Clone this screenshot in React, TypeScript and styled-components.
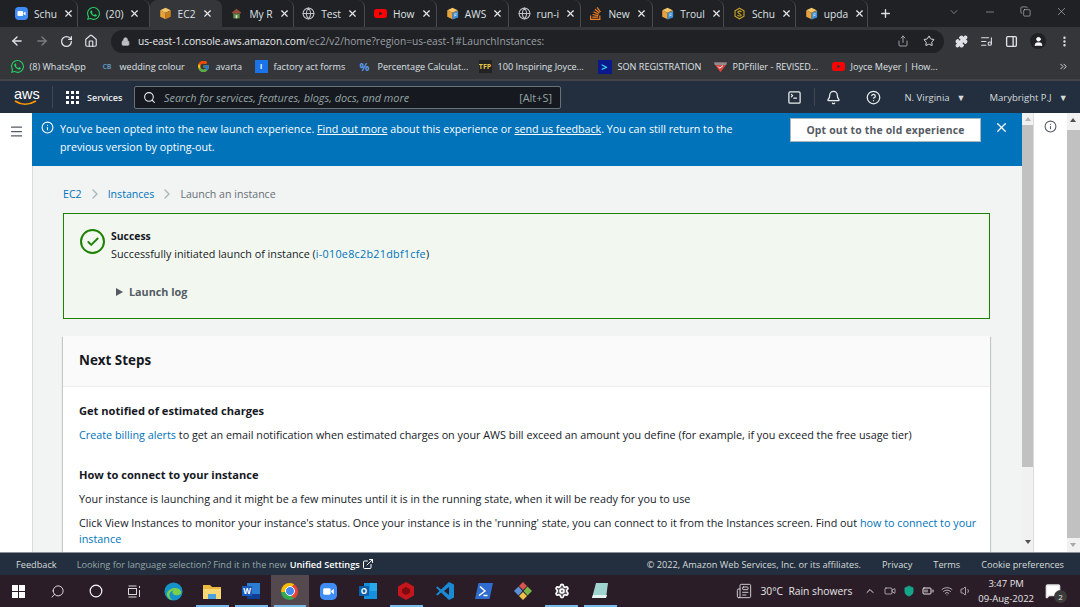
import React from 'react';
import styled, { createGlobalStyle } from 'styled-components';
import { SiWhatsapp, SiYoutube, SiStackoverflow } from 'react-icons/si';
import { FcGoogle } from 'react-icons/fc';
import {
  ArrowLeft, ArrowRight, RotateCw, Home, Lock, Share, Star, Puzzle, ListMusic, PanelRight, User,
  MoreVertical, X, Plus, ChevronDown, Minus, Copy, Globe, Search, Info, Menu, Bell, HelpCircle,
  SquareTerminal, Check, ExternalLink, Settings, Circle, ChevronUp, Wifi, Volume1, MessageSquare,
  ChevronRight, ChevronsRight, Newspaper, Video, BatteryMedium, ShieldCheck
} from 'lucide-react';

const Global = createGlobalStyle`
  html, body { margin:0; padding:0; height:100%; overflow:hidden; }
  body { font-family:"Open Sans","Noto Sans",sans-serif; background:#fff; }
  * { box-sizing:border-box; }
`;
const Page = styled.div`
  width:1080px;
  height:607px;
  display:flex;
  flex-direction:column;
  overflow:hidden;
`;
const TabStrip = styled.div`
  height:27px;
  background:#202124;
  display:flex;
  align-items:center;
  padding-left:6.5px;
  color:#dee1e6;
`;
const Tab = styled.div<{ $active?: boolean }>`
  width:71.8px;
  height:27px;
  flex:none;
  display:flex;
  align-items:center;
  gap:6px;
  padding:0 9px 0 8.5px;
  font-size:10.2px;
  border-radius:7px 7px 0 0;
  background:${p => (p.$active ? '#35363a' : 'transparent')};
  border-right:1px solid ${p => (p.$active ? 'transparent' : '#4a4b4f')};
  white-space:nowrap;
  > svg:last-child { margin-left:auto; flex:none; }
`;
const TabIconBox = styled.span`
  width:13px;
  height:13px;
  flex:none;
  display:flex;
  align-items:center;
  justify-content:center;
`;
const NewTab = styled.div`
  margin-left:11px;
  display:flex;
`;
const WindowButtons = styled.div`
  margin-left:auto;
  display:flex;
  align-items:center;
  gap:24px;
  padding:0 12px 4px 0;
  color:#d8d9db;
`;
const AddressRow = styled.div`
  height:27px;
  padding:1px 0 0 10px;
  background:#35363a;
  display:flex;
  align-items:center;
  color:#dee1e6;
`;
const NavButtons = styled.div`
  display:flex;
  align-items:center;
  gap:11px;
  width:101px;
  flex:none;
`;
const Omnibox = styled.div`
  width:833px;
  height:23px;
  flex:none;
  background:#202124;
  border-radius:12px;
  display:flex;
  align-items:center;
  padding:0 9px 0 10px;
  font-size:10.2px;
  color:#9aa0a6;
`;
const OmniText = styled.div`
  margin-left:8px;
  flex:1;
  white-space:nowrap;
  > b { font-weight:400; color:#e8eaed; }
`;
const OmniIcons = styled.div`
  display:flex;
  gap:14px;
  align-items:center;
`;
const ExtensionIcons = styled.div`
  margin-left:11px;
  display:flex;
  align-items:center;
  gap:12px;
`;
const Avatar = styled.div`
  width:16px;
  height:16px;
  border-radius:50%;
  background:#202124;
  display:flex;
  align-items:center;
  justify-content:center;
`;
const Bookmarks = styled.div`
  height:27px;
  background:#35363a;
  border-bottom:2px solid #434447;
  display:flex;
  align-items:center;
  padding:0 11px 0 10.5px;
  font-size:9.1px;
  color:#dee1e6;
  white-space:nowrap;
`;
const Bookmark = styled.div<{ $w: number }>`
  width:${p => p.$w}px;
  flex:none;
  display:flex;
  align-items:center;
  gap:6px;
`;
const BookmarkEnd = styled.div`
  margin-left:auto;
  display:flex;
`;
const Mini = styled.span<{ $bg: string; $color?: string; $size?: number }>`
  width:${p => p.$size ?? 13}px;
  height:${p => p.$size ?? 13}px;
  flex:none;
  background:${p => p.$bg};
  color:${p => p.$color || '#fff'};
  display:inline-flex;
  align-items:center;
  justify-content:center;
  font-size:${p => ((p.$size ?? 13) > 13 ? 11 : 7)}px;
  font-weight:700;
  overflow:hidden;
`;
const ChromeBall = styled.span`
  width:17px;
  height:17px;
  border-radius:50%;
  background:conic-gradient(from 30deg, #ea4335 0 120deg, #34a853 120deg 240deg, #fbbc04 240deg 360deg);
  display:flex;
  align-items:center;
  justify-content:center;
  &::after {
    content:'';
    width:8px;
    height:8px;
    border-radius:50%;
    background:#4285f4;
    border:1.5px solid #fff;
  }
`;
const AwsBar = styled.div`
  height:32px;
  background:#232f3e;
  display:flex;
  align-items:center;
  color:#d5dbdb;
  font-size:9.5px;
`;
const AwsLogo = styled.div`
  width:52px;
  padding-left:14px;
  flex:none;
  display:flex;
  flex-direction:column;
  color:#fff;
  font:400 14.5px/11px "Liberation Sans",sans-serif;
`;
const ServicesBox = styled.div`
  width:82px;
  height:22px;
  flex:none;
  padding-left:13px;
  border-left:1px solid #414750;
  display:flex;
  align-items:center;
  gap:8px;
  font-size:9px;
  color:#eaeded;
  font-weight:600;
`;
const SearchBox = styled.div`
  width:427px;
  height:23px;
  flex:none;
  background:#16191f;
  border:1px solid #687078;
  border-radius:2px;
  display:flex;
  align-items:center;
  padding:0 8px;
  gap:8px;
  font-size:10.9px;
  color:#95a5a6;
  > i { flex:1; }
`;
const AwsActions = styled.div`
  margin-left:auto;
  display:flex;
  align-items:center;
  height:100%;
`;
const AwsAction = styled.div<{ $w: number }>`
  width:${p => p.$w}px;
  height:100%;
  display:flex;
  align-items:center;
  justify-content:center;
  gap:7px;
  white-space:nowrap;
  position:relative;
  & + &::before {
    content:'';
    position:absolute;
    left:0;
    top:7px;
    bottom:7px;
    width:1px;
    background:#414750;
  }
`;
const Caret = styled.span`
  font-size:9px;
`;
const Body = styled.div`
  flex:1;
  min-height:0;
  display:flex;
`;
const SideRail = styled.div`
  width:32px;
  flex:none;
  background:#fff;
  padding:9px 0 0 8.5px;
  color:#545b64;
`;
const Main = styled.div`
  width:990px;
  flex:none;
  background:#f2f3f3;
  overflow:hidden;
  font-size:10.8px;
  color:#16191f;
  display:flex;
  flex-direction:column;
`;
const Banner = styled.div`
  height:53px;
  flex:none;
  background:#0073bb;
  color:#fff;
  display:flex;
  padding:8px 13px 0 9px;
  font-size:10.7px;
  line-height:18px;
`;
const BannerText = styled.div`
  width:696px;
  margin:-1px 0 0 6px;
  flex:none;
  > a { color:#fff; text-decoration:underline; }
`;
const OptOut = styled.button`
  width:191px;
  height:24px;
  flex:none;
  margin:-3px 0 0 34px;
  padding:0;
  background:#fff;
  border:1px solid #aab7b8;
  border-radius:0;
  color:#545b64;
  white-space:nowrap;
  font:700 10.4px "Open Sans",sans-serif;
  letter-spacing:.2px;
`;
const BannerClose = styled.div`
  margin:-1px 0 0 13px;
  display:flex;
`;
const Content = styled.div`
  flex:1;
  border-left:1px solid #d5dbdb;
  padding:0 32px 0 30px;
`;
const Crumbs = styled.div`
  height:47px;
  padding-top:8px;
  display:flex;
  align-items:center;
  gap:5px;
  font-size:10.6px;
  color:#687078;
  > a { color:#0073bb; }
`;
const Flash = styled.div`
  height:106px;
  border:1px solid #1d8102;
  background:#f2f8f0;
  padding:14px 15px 14px 16px;
  display:flex;
  gap:6px;
  line-height:17px;
`;
const FlashIcon = styled.div`
  width:25px;
  height:25px;
  flex:none;
  margin-top:1px;
  border:2.5px solid #1d8102;
  border-radius:50%;
  color:#1d8102;
  display:flex;
  align-items:center;
  justify-content:center;
`;
const FlashBody = styled.div`
  flex:1;
  > b { font-weight:700; display:block; font-size:10.4px; }
`;
const InstanceLink = styled.a`
  color:#0073bb;
  letter-spacing:.26px;
`;
const LogToggle = styled.div`
  margin:21px 0 0 5px;
  font-weight:700;
  color:#545b64;
  display:flex;
  align-items:center;
  gap:6px;
`;
const Triangle = styled.span`
  width:0;
  height:0;
  border-left:7px solid #545b64;
  border-top:4px solid transparent;
  border-bottom:4px solid transparent;
`;
const Card = styled.div`
  margin-top:17px;
  background:#fff;
  box-shadow:0 1px 1px 0 rgba(0,28,36,.3), 1px 1px 1px 0 rgba(0,28,36,.15), -1px 1px 1px 0 rgba(0,28,36,.15);
`;
const CardHead = styled.div`
  height:51px;
  padding:0 0 2px 16px;
  background:#fafafa;
  border-bottom:1px solid #eaeded;
  display:flex;
  align-items:center;
  font-size:13.4px;
  font-weight:700;
`;
const CardBody = styled.div`
  padding:15px 10px 24px 16px;
`;
const Heading = styled.div`
  font-size:11.1px;
  font-weight:700;
  line-height:17px;
  margin-bottom:8px;
`;
const Para = styled.div<{ $gap?: number }>`
  line-height:16px;
  margin-bottom:${p => p.$gap ?? 0}px;
  > a { color:#0073bb; }
`;
const PanelRail = styled.div`
  width:58px;
  flex:none;
  background:#fff;
  display:flex;
  position:relative;
`;
const Track = styled.div<{ $w: number; $top: number }>`
  width:${p => p.$w}px;
  flex:none;
  padding-top:${p => p.$top}px;
  background:#f1f1f1;
`;
const Thumb = styled.div<{ $h: number }>`
  height:${p => p.$h}px;
  background:#c1c1c1;
`;
const InfoCol = styled.div`
  width:34px;
  flex:none;
  display:flex;
  justify-content:center;
  padding-top:7px;
  color:#545b64;
  border-left:1px solid #dcdcdc;
`;
const ScrollArrow = styled.span<{ $x: number; $y: number; $c: string }>`
  position:absolute;
  left:${p => p.$x}px;
  width:0;
  height:0;
  border-left:3px solid transparent;
  border-right:3px solid transparent;
`;
const UpArrow = styled(ScrollArrow)`
  top:${p => p.$y}px;
  border-bottom:4px solid ${p => p.$c};
`;
const DownArrow = styled(ScrollArrow)`
  bottom:${p => p.$y}px;
  border-top:4px solid ${p => p.$c};
`;
const Footer = styled.div`
  height:23px;
  flex:none;
  background:#232f3e;
  border-top:1px solid #8a9199;
  display:flex;
  align-items:center;
  padding:0 16px;
  font-size:9.2px;
  color:#d5dbdb;
  white-space:nowrap;
`;
const FooterHint = styled.div`
  margin-left:20px;
  color:#95a5a6;
  display:flex;
  align-items:center;
  gap:2px;
  > b { color:#fff; font-weight:600; margin-left:1px; }
`;
const FooterLinks = styled.div`
  margin-left:auto;
  display:flex;
  gap:21px;
`;
const Taskbar = styled.div`
  height:32px;
  flex:none;
  background:#2a1d27;
  display:flex;
  align-items:center;
  color:#fff;
`;
const TaskItem = styled.div<{ $active?: boolean; $open?: boolean }>`
  width:38.8px;
  height:32px;
  flex:none;
  display:flex;
  align-items:center;
  justify-content:center;
  position:relative;
  background:${p => (p.$active ? '#54494f' : 'transparent')};
  &:first-child { margin-left:-1px; }
  &::after {
    content:'';
    position:absolute;
    left:3px;
    right:3px;
    bottom:0;
    height:2px;
    background:${p => (p.$open ? '#76b9ed' : 'transparent')};
  }
`;
const MirroredSearch = styled(Search)`
  transform:scaleX(-1);
`;
const Tray = styled.div`
  margin-left:auto;
  display:flex;
  align-items:center;
  font-size:10.3px;
  color:#e6e4e6;
  padding-right:19px;
  white-space:nowrap;
`;
const Weather = styled.div`
  display:flex;
  align-items:center;
  gap:8px;
  margin-right:12px;
`;
const TrayIcons = styled.div`
  display:flex;
  align-items:center;
  gap:7.2px;
  margin-right:6px;
`;
const Clock = styled.div`
  font-size:9.5px;
  line-height:15px;
  text-align:center;
`;
const Notify = styled.div`
  position:relative;
  display:flex;
  margin-left:11px;
`;
const NotifyBadge = styled.span`
  position:absolute;
  right:-6px;
  bottom:-4px;
  width:13px;
  height:13px;
  border-radius:50%;
  background:#3b3b3b;
  font-size:8px;
  line-height:13px;
  text-align:center;
`;

const Earth = () => <Globe size={13} color="#bdc1c6" />;

// orange aws cube, the docs tabs carry a small blue page on it
const Cube = ({ page, size = 13 }: { page?: boolean; size?: number }) => (
  <svg width={size} height={size} viewBox="0 0 16 16">
    <path d="M8 1 14.5 4 8 7 1.5 4z" fill="#f6c667" />
    <path d="M1.5 4 8 7v8L1.5 12z" fill="#e8a33d" />
    <path d="M14.5 4 8 7v8l6.500-3z" fill="#c77f1e" />
    {page && <path d="M8 7.500 15 5v8l-7 2.500z" fill="#3f8fd2" />}
    {page && <path d="M10 9l3-1M10 11l3-1" stroke="#fff" strokeWidth=".8" />}
  </svg>
);
const ZoomMark = ({ size = 13 }: { size?: number }) => (
  <svg width={size} height={size} viewBox="0 0 16 16">
    <rect width="16" height="16" rx="4.500" fill="#3f8cf5" />
    <rect x="3" y="5" width="7" height="6" rx="1.300" fill="#fff" />
    <path d="M10.500 7.500 13 5.500v5l-2.500-2z" fill="#fff" />
  </svg>
);
const SchuMark = () => (
  <svg width="13" height="13" viewBox="0 0 16 16" fill="none" stroke="#c9a227" strokeWidth="1.400">
    <path d="M8 1.500 13.500 4.700v6.600L8 14.500 2.500 11.300V4.700z" />
    <path d="M10.500 6C9 4.500 6 5 6 6.500S10 8.500 10 10 7 11.500 5.500 10" />
  </svg>
);
const HouseMark = () => (
  <svg width="13" height="13" viewBox="0 0 16 16">
    <path d="M2 7 8 2l6 5-1 1H3z" fill="#9c4a3c" />
    <path d="M4 8h8v6H4z" fill="#5f8a4a" />
    <path d="M7 10h2v4H7z" fill="#e6e0c8" />
  </svg>
);
const PdfMark = () => (
  <svg width="13" height="13" viewBox="0 0 16 16">
    <path d="M0 3h16l-2 4-6 8-6-8z" fill="#d9453d" />
    <path d="M0 3h16l-1 3H1z" fill="#8a8d91" />
    <path d="M5 8l2 2 4-3" stroke="#fff" strokeWidth="1.200" fill="none" />
  </svg>
);
const EdgeMark = () => (
  <svg width="19" height="19" viewBox="0 0 20 20">
    <circle cx="10" cy="10" r="9.500" fill="#1593c9" />
    <path d="M3 13c1-7 12-9 15-3 1 3-2 4-5 4-4 0-5-3-3-5-5 1-6 7-1 10-3 0-6-3-6-6z" fill="#7ad04b" />
  </svg>
);
const FolderMark = () => (
  <svg width="18" height="16" viewBox="0 0 18 16">
    <path d="M0 2h7l2 2h9v12H0z" fill="#e9b93f" />
    <path d="M0 6h18v10H0z" fill="#f8d775" />
    <path d="M5 11h8v5H5z" fill="#4aa3df" />
  </svg>
);
const WordMark = () => (
  <svg width="18" height="16" viewBox="0 0 18 16">
    <path d="M5 0h13v16H5z" fill="#2b7cd3" />
    <path d="M5 11h13v5H5z" fill="#103f91" />
    <rect y="3" width="10" height="10" fill="#185abd" />
    <text x="5" y="11" textAnchor="middle" fontSize="8" fontWeight="700" fill="#fff" fontFamily="Open Sans">W</text>
  </svg>
);
const OutlookMark = () => (
  <svg width="18" height="16" viewBox="0 0 18 16">
    <path d="M5 0h13v16H5z" fill="#1490df" />
    <path d="M11 0h7v8h-7z" fill="#28a8ea" />
    <rect y="3" width="10" height="10" fill="#0a5fa8" />
    <text x="5" y="11" textAnchor="middle" fontSize="8" fontWeight="700" fill="#fff" fontFamily="Open Sans">O</text>
  </svg>
);
const RedHexMark = () => (
  <svg width="16" height="18" viewBox="0 0 16 18">
    <path d="M8 0 16 4.500v9L8 18 0 13.500v-9z" fill="#c4161c" />
    <path d="M8 5 12 7.200v3.600L8 13 4 10.800V7.200z" fill="#7d0c10" />
  </svg>
);
const VsCodeMark = () => (
  <svg width="18" height="18" viewBox="0 0 18 18">
    <path d="M13 0 18 2.500v13L13 18 5 10.500 1.500 13.500 0 12.500 3.500 9 0 5.500 1.500 4.500 5 7.500z" fill="#1a8ad4" />
    <path d="M13 5 8 9l5 4z" fill="#2a1d27" />
  </svg>
);
const PowerShellMark = () => (
  <svg width="18" height="16" viewBox="0 0 18 16">
    <path d="M3.500 0H18l-3.500 16H0z" fill="#2f6ccf" />
    <path d="M5 3.500 10 8 4 12.500" stroke="#fff" strokeWidth="1.500" fill="none" />
    <path d="M8.500 12.500h4" stroke="#fff" strokeWidth="1.500" />
  </svg>
);
const GitMark = () => (
  <svg width="18" height="18" viewBox="0 0 18 18">
    <path d="M9 0 13 4 9 8 5 4z" fill="#d9534f" />
    <path d="M13.500 4.500 18 9l-4.500 4.500L9.500 9z" fill="#7ab648" />
    <path d="M9 10l4 4-4 4-4-4z" fill="#f0c24b" />
    <path d="M4.500 4.500 8.500 9l-4 4.500L0 9z" fill="#5b8fd9" />
  </svg>
);
const NotesMark = () => (
  <svg width="18" height="18" viewBox="0 0 18 18">
    <path d="M5 1h12l-2 15H1z" fill="#9fd3d0" />
    <path d="M1 16h14l1-3H2z" fill="#e4f3f2" />
  </svg>
);
const WinLogo = () => (
  <svg width="13" height="13" viewBox="0 0 13 13" fill="#fff">
    <path d="M0 0h6v6H0zM7 0h6v6H7zM0 7h6v6H0zM7 7h6v6H7z" />
  </svg>
);
const TaskView = () => (
  <svg width="14" height="13" viewBox="0 0 14 13" fill="none" stroke="#d8d8d8">
    <path d="M.5 1h8M.5 12h8" />
    <rect x=".5" y="3.500" width="8" height="6" />
    <path d="M11.500 1v2M11.500 5v7" />
  </svg>
);
const NineDots = () => (
  <svg width="13" height="13" viewBox="0 0 13 13" fill="#fff">
    <path d="M0 0h3v3H0zM5 0h3v3H5zM10 0h3v3h-3zM0 5h3v3H0zM5 5h3v3H5zM10 5h3v3h-3zM0 10h3v3H0zM5 10h3v3H5zM10 10h3v3h-3z" />
  </svg>
);

const tabs: { icon: React.ReactNode; label: string; active?: boolean }[] = [
  { icon: <ZoomMark />, label: 'Schu' },
  { icon: <SiWhatsapp size={13} color="#25d366" />, label: '(20)' },
  { icon: <Cube />, label: 'EC2', active: true },
  { icon: <HouseMark />, label: 'My R' },
  { icon: <Earth />, label: 'Test' },
  { icon: <SiYoutube size={13} color="#f00" />, label: 'How' },
  { icon: <Cube page />, label: 'AWS' },
  { icon: <Earth />, label: 'run-i' },
  { icon: <SiStackoverflow size={13} color="#f48024" />, label: 'New' },
  { icon: <Cube page />, label: 'Troul' },
  { icon: <SchuMark />, label: 'Schu' },
  { icon: <Cube page />, label: 'upda' },
];

const tasks: { node: React.ReactNode; active?: boolean; open?: boolean }[] = [
  { node: <EdgeMark /> },
  { node: <FolderMark />, open: true },
  { node: <WordMark />, open: true },
  { node: <ChromeBall />, active: true, open: true },
  { node: <ZoomMark size={17} /> },
  { node: <OutlookMark /> },
  { node: <RedHexMark />, open: true },
  { node: <VsCodeMark /> },
  { node: <PowerShellMark /> },
  { node: <GitMark /> },
  { node: <Settings size={16} color="#fff" fill="#fff" fillOpacity={0.25} strokeWidth={2.4} />, open: true },
  { node: <NotesMark />, open: true },
];

function App() {
  return (
    <Page>
      <Global />
      <TabStrip>
        {tabs.map((t, i) => (
          <Tab key={i} $active={t.active}>
            <TabIconBox>{t.icon}</TabIconBox>
            <span>{t.label}</span>
            <X size={11} color="#e8eaed" strokeWidth={2.5} />
          </Tab>
        ))}
        <NewTab><Plus size={13} strokeWidth={2.5} /></NewTab>
        <WindowButtons>
          <ChevronDown size={12} strokeWidth={1} />
          <Minus size={12} strokeWidth={1} />
          <Copy size={11} strokeWidth={1.2} />
          <X size={13} strokeWidth={1} />
        </WindowButtons>
      </TabStrip>
      <AddressRow>
        <NavButtons>
          <ArrowLeft size={14} strokeWidth={2.4} />
          <ArrowRight size={14} color="#7a7c80" strokeWidth={2.4} />
          <RotateCw size={13} strokeWidth={2.4} />
          <Home size={14} strokeWidth={2} />
        </NavButtons>
        <Omnibox>
          <Lock size={9} fill="#bdc1c6" color="#bdc1c6" />
          <OmniText><b>us-east-1.console.aws.amazon.com</b>/ec2/v2/home?region=us-east-1#LaunchInstances:</OmniText>
          <OmniIcons>
            <Share size={12} />
            <Star size={12} color="#dee1e6" />
          </OmniIcons>
        </Omnibox>
        <ExtensionIcons>
          <Puzzle size={13} fill="#dee1e6" />
          <ListMusic size={13} />
          <PanelRight size={13} strokeWidth={2.5} />
          <Avatar><User size={11} fill="#fff" color="#fff" /></Avatar>
          <MoreVertical size={13} strokeWidth={2.5} />
        </ExtensionIcons>
      </AddressRow>
      <Bookmarks>
        <Bookmark $w={90}><SiWhatsapp size={13} color="#25d366" />(8) WhatsApp</Bookmark>
        <Bookmark $w={96}><Mini $bg="transparent" $color="#5b8fb9">CB</Mini>wedding colour</Bookmark>
        <Bookmark $w={58}><FcGoogle size={13} />avarta</Bookmark>
        <Bookmark $w={103}><Mini $bg="#1a73e8">i</Mini>factory act forms</Bookmark>
        <Bookmark $w={121}><Mini $bg="transparent" $color="#5b9bf0" $size={14}>%</Mini>Percentage Calculat...</Bookmark>
        <Bookmark $w={119}><Mini $bg="#222" $color="#e8c547">TFP</Mini>100 Inspiring Joyce...</Bookmark>
        <Bookmark $w={116}><Mini $bg="#0a1a8c" $color="#3bd3e8" $size={14}>&gt;</Mini>SON REGISTRATION</Bookmark>
        <Bookmark $w={118}><PdfMark />PDFfiller - REVISED...</Bookmark>
        <Bookmark $w={120}><SiYoutube size={13} color="#f00" />Joyce Meyer | How...</Bookmark>
        <BookmarkEnd><ChevronsRight size={11} /></BookmarkEnd>
      </Bookmarks>
      <AwsBar>
        <AwsLogo>
          aws
          <svg width="24" height="6" viewBox="0 0 24 6"><path d="M1 1c6 4 14 4 21 0" stroke="#ff9900" strokeWidth="1.6" fill="none" /></svg>
        </AwsLogo>
        <ServicesBox><NineDots />Services</ServicesBox>
        <SearchBox>
          <Search size={13} color="#eaeded" />
          <i>Search for services, features, blogs, docs, and more</i>
          <span>[Alt+S]</span>
        </SearchBox>
        <AwsActions>
          <AwsAction $w={39}><SquareTerminal size={15} color="#eaeded" /></AwsAction>
          <AwsAction $w={39}><Bell size={15} color="#eaeded" /></AwsAction>
          <AwsAction $w={40}><HelpCircle size={15} color="#eaeded" /></AwsAction>
          <AwsAction $w={84}>N. Virginia <Caret>▼</Caret></AwsAction>
          <AwsAction $w={103}>Marybright P.J <Caret>▼</Caret></AwsAction>
        </AwsActions>
      </AwsBar>
      <Body>
        <SideRail><Menu size={15} /></SideRail>
        <Main>
          <Banner>
            <Info size={13} color="#fff" />
            <BannerText>
              You've been opted into the new launch experience. <a>Find out more</a> about this experience or <a>send us feedback</a>. You can still return to the previous version by opting-out.
            </BannerText>
            <OptOut>Opt out to the old experience</OptOut>
            <BannerClose><X size={15} color="#fff" /></BannerClose>
          </Banner>
          <Content>
            <Crumbs>
              <a>EC2</a>
              <ChevronRight size={16} color="#aab7b8" />
              <a>Instances</a>
              <ChevronRight size={16} color="#aab7b8" />
              Launch an instance
            </Crumbs>
            <Flash>
              <FlashIcon><Check size={14} strokeWidth={3.2} /></FlashIcon>
              <FlashBody>
                <b>Success</b>
                <div>Successfully initiated launch of instance (<InstanceLink>i-010e8c2b21dbf1cfe</InstanceLink>)</div>
                <LogToggle><Triangle />Launch log</LogToggle>
              </FlashBody>
            </Flash>
            <Card>
              <CardHead>Next Steps</CardHead>
              <CardBody>
                <Heading>Get notified of estimated charges</Heading>
                <Para $gap={23}><a>Create billing alerts</a> to get an email notification when estimated charges on your AWS bill exceed an amount you define (for example, if you exceed the free usage tier)</Para>
                <Heading>How to connect to your instance</Heading>
                <Para $gap={8}>Your instance is launching and it might be a few minutes until it is in the running state, when it will be ready for you to use</Para>
                <Para>Click View Instances to monitor your instance's status. Once your instance is in the 'running' state, you can connect to it from the Instances screen. Find out <a>how to connect to your instance</a></Para>
              </CardBody>
            </Card>
          </Content>
        </Main>
        <PanelRail>
          <Track $w={11} $top={12}><Thumb $h={342} /></Track>
          <InfoCol><Info size={13} /></InfoCol>
          <Track $w={13} $top={17}><Thumb $h={408} /></Track>
          <UpArrow $x={3} $y={4} $c="#b5b5b5" />
          <UpArrow $x={48} $y={5} $c="#505050" />
          <DownArrow $x={3} $y={8} $c="#505050" />
          <DownArrow $x={48} $y={5} $c="#a8a8a8" />
        </PanelRail>
      </Body>
      <Footer>
        Feedback
        <FooterHint>Looking for language selection? Find it in the new <b>Unified Settings</b><ExternalLink size={12} color="#fff" /></FooterHint>
        <FooterLinks>
          <span>© 2022, Amazon Web Services, Inc. or its affiliates.</span>
          <span>Privacy</span>
          <span>Terms</span>
          <span>Cookie preferences</span>
        </FooterLinks>
      </Footer>
      <Taskbar>
        <TaskItem><WinLogo /></TaskItem>
        <TaskItem><MirroredSearch size={15} strokeWidth={1.3} /></TaskItem>
        <TaskItem><Circle size={14} strokeWidth={2} /></TaskItem>
        <TaskItem><TaskView /></TaskItem>
        {tasks.map((t, i) => (
          <TaskItem key={i} $active={t.active} $open={t.open}>{t.node}</TaskItem>
        ))}
        <Tray>
          <Weather>
            <Newspaper size={16} strokeWidth={1.3} />
            <span>30°C&nbsp; Rain showers</span>
          </Weather>
          <TrayIcons>
            <ChevronUp size={12} />
            <Video size={12} strokeWidth={1.3} />
            <ShieldCheck size={12} fill="#15a58a" color="#15a58a" />
            <BatteryMedium size={12} />
            <Wifi size={12} strokeWidth={1.4} />
            <Volume1 size={12} strokeWidth={1.4} />
          </TrayIcons>
          <Clock>3:47 PM<br />09-Aug-2022</Clock>
          <Notify>
            <MessageSquare size={16} fill="#fff" />
            <NotifyBadge>2</NotifyBadge>
          </Notify>
        </Tray>
      </Taskbar>
    </Page>
  );
}

export default App;
